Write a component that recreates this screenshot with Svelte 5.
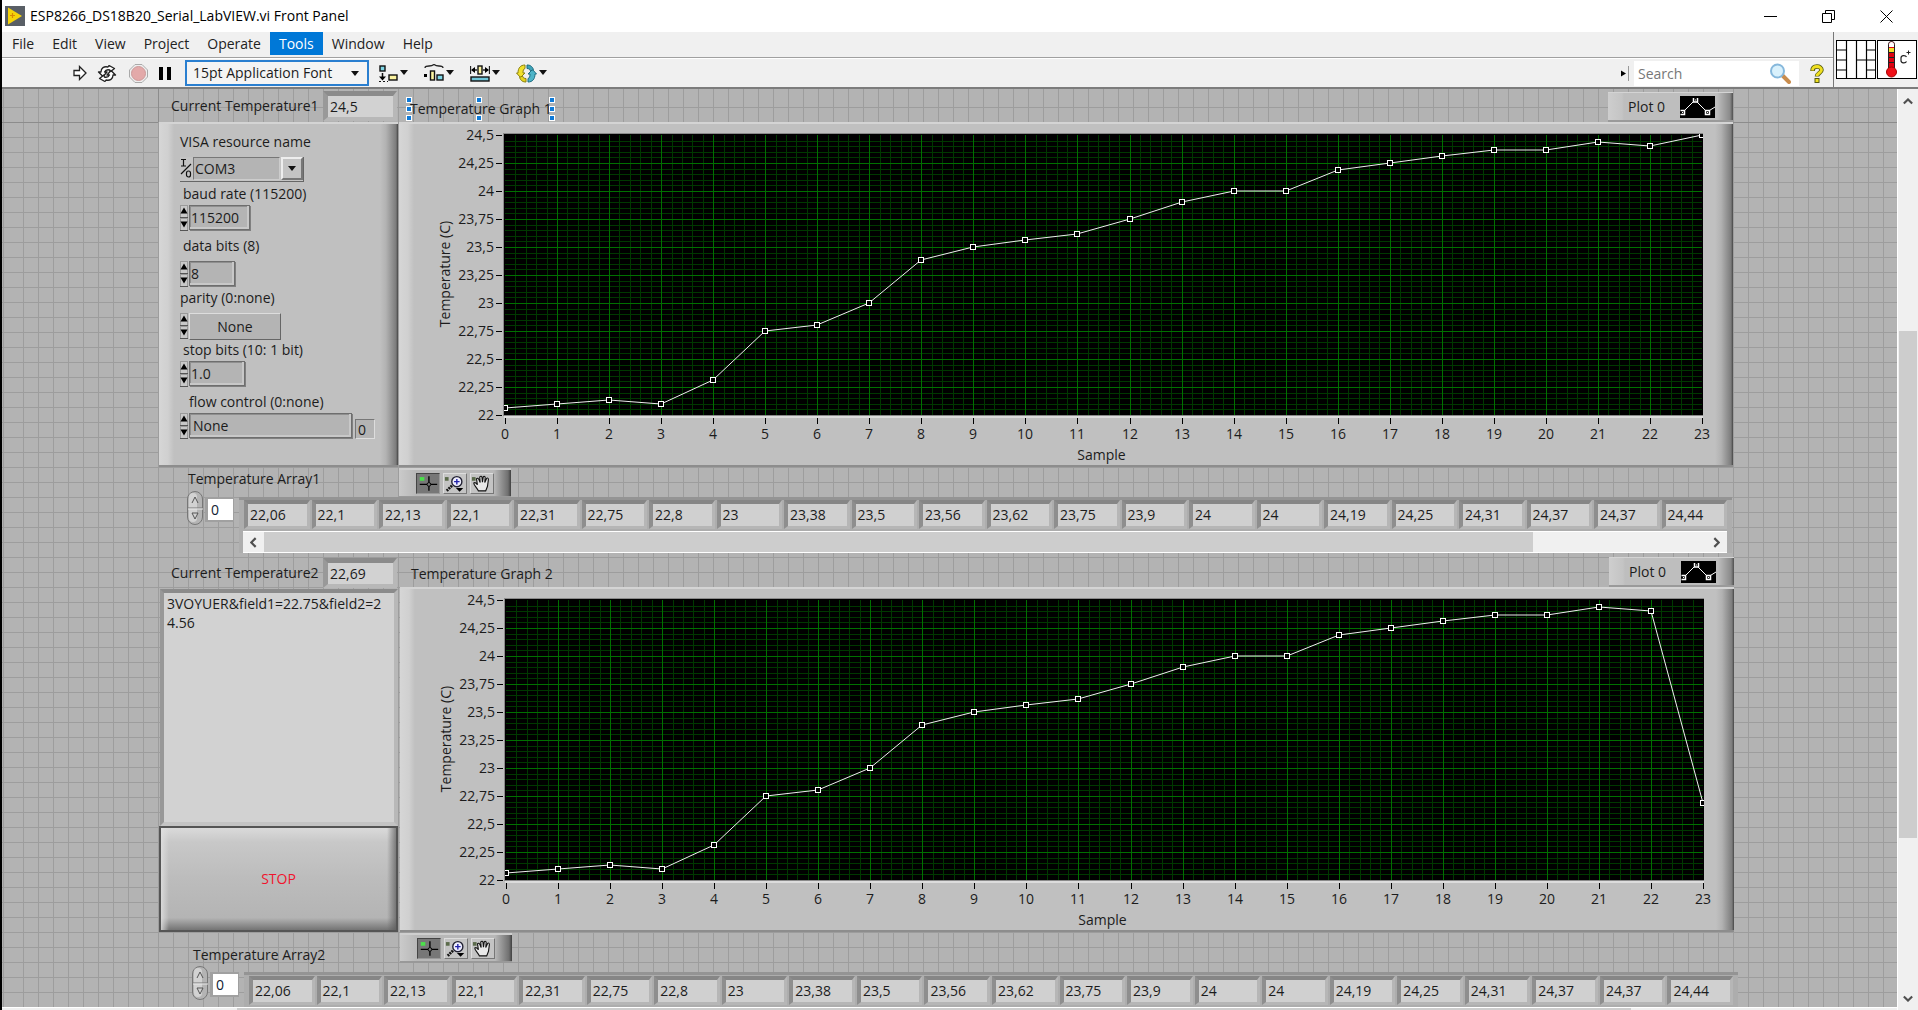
<script>
  const menus = ['File', 'Edit', 'View', 'Project', 'Operate', 'Tools', 'Window', 'Help'];
  const base = [
    22.06, 22.1, 22.13, 22.1, 22.31, 22.75, 22.8, 23, 23.38, 23.5, 23.56, 23.62,
    23.75, 23.9, 24, 24, 24.19, 24.25, 24.31, 24.37, 24.37, 24.44, 24.4
  ];
  const series1 = [...base, 24.5];
  const series2 = [...base, 22.69];
  const cells = base.slice(0, 22).map(comma);

  let serialText = $state('3VOYUER&field1=22.75&field2=24.56');
  let graphWidth = $state(1334);

  const LEFT = 106;
  const TOP = 13;
  const BOTTOM = 293;
  const samples = Array.from({ length: 24 }, (_, i) => i);
  const temps = Array.from({ length: 11 }, (_, i) => 22 + i * 0.25);
  const right = $derived(graphWidth - 31);

  function comma(n) {
    return String(n).replace('.', ',');
  }
  function px(i) {
    return Math.round(LEFT + (i / 23) * (right - LEFT));
  }
  function py(t) {
    return Math.round(BOTTOM - ((t - 22) / 2.5) * (BOTTOM - TOP));
  }
  function minorX() {
    return Array.from({ length: 116 }, (_, i) => i).filter((i) => i % 5).map((i) => px(i / 5));
  }
  function minorY() {
    return Array.from({ length: 51 }, (_, i) => i).filter((i) => i % 5).map((i) => py(22 + i / 20));
  }
  function line(data) {
    return data.map((t, i) => `${px(i)},${py(t)}`).join(' ');
  }
</script>

{#snippet chart(data, id)}
  <svg class="chart" role="img" aria-label="Temperature by sample">
    <clipPath {id}><rect x={LEFT - 1} y={TOP - 1} width={right - LEFT + 2} height={BOTTOM - TOP + 1} /></clipPath>
    <rect x={LEFT - 2} y={TOP - 2} width={right - LEFT + 3} height={BOTTOM - TOP + 3} fill="#8a8a8a" />
    <rect x={LEFT - 1} y={BOTTOM + 1} width={right - LEFT + 2} height="2" fill="#dcdcdc" />
    <rect x={LEFT - 1} y={TOP - 1} width={right - LEFT + 2} height={BOTTOM - TOP + 1} fill="#000" />
    <g clip-path="url(#{id})">
      <g class="minor">
        {#each minorX() as x}<line x1={x + 0.5} x2={x + 0.5} y1={TOP} y2={BOTTOM} />{/each}
        {#each minorY() as y}<line x1={LEFT} x2={right} y1={y + 0.5} y2={y + 0.5} />{/each}
      </g>
      <g class="major">
        {#each samples.slice(1, 23) as i}<line x1={px(i) + 0.5} x2={px(i) + 0.5} y1={TOP} y2={BOTTOM} />{/each}
        {#each temps.slice(1, 10) as t}<line x1={LEFT} x2={right} y1={py(t) + 0.5} y2={py(t) + 0.5} />{/each}
      </g>
      <polyline class="plot" points={line(data)} />
      {#each data as t, i}
        <rect class="mark" x={px(i) - 2.5} y={py(t) - 2.5} width="5" height="5" />
      {/each}
    </g>
    {#each temps as t}
      <line class="tick" x1="97" x2="103" y1={py(t) + 0.5} y2={py(t) + 0.5} />
      <text x="95" y={py(t) + 5} text-anchor="end">{comma(t)}</text>
    {/each}
    {#each samples as i}
      <line class="tick" x1={px(i) + 0.5} x2={px(i) + 0.5} y1="296" y2="302" />
      <text x={px(i)} y="317" text-anchor="middle">{i}</text>
    {/each}
    <text x={(LEFT + right) / 2 - 2} y="338" text-anchor="middle">Sample</text>
    <text transform="translate(51 152) rotate(-90)" text-anchor="middle">Temperature (C)</text>
  </svg>
{/snippet}

{#snippet legend()}
  <div class="legend">
    <span>Plot 0</span>
    <svg width="35" height="22" viewBox="0 0 35 22" aria-hidden="true">
      <rect width="35" height="22" fill="#000" />
      <path d="M3 16 15 4 27 16 35 11" fill="none" stroke="#fff" />
      <path d="M0.500 14.500h4v4h-4M13.500 2v4h4v-4M25.500 14.500h4v4h-4z" fill="#000" stroke="#fff" stroke-width="1.500" />
      <path d="M2 16.500h1M15 4h1M27 16.500h1" stroke="#fff" />
    </svg>
  </div>
{/snippet}

{#snippet palette()}
  <div class="palette">
    <button class="pressed" aria-label="Cursor">
      <svg viewBox="0 0 24 20"><rect x="3" y="3" width="5" height="4" fill="#4be04b" /><path d="M13 2v16M3 11h19" stroke="#000" stroke-width="1.500" /><circle cx="13" cy="11" r="2" fill="#777" stroke="#000" /></svg>
    </button>
    <button aria-label="Zoom">
      <svg viewBox="0 0 24 20"><rect x="1" y="3" width="4" height="4" fill="#5b6b4b" /><path d="M3 18l6-6" stroke="#111" stroke-width="3" stroke-dasharray="2 1" /><circle cx="14" cy="8" r="5.500" fill="#eef" stroke="#223" stroke-width="1.500" /><path d="M14 5v6M11 8h6" stroke="#22a" stroke-width="1.500" /><path d="M13 15h8l-4 4z" fill="#000" /></svg>
    </button>
    <button aria-label="Pan">
      <svg viewBox="0 0 24 20"><rect x="1" y="3" width="4" height="4" fill="#5b6b4b" /><path d="M8 18C6 14 3 12 3 9.500c1.500-1 3 0 4 2L6 5c1-1.500 2-.5 2.500.5L10 9 9.500 3c1-1.500 2.500-1 2.500.5l.5 5 .8-5.500c.8-1.300 2.200-.8 2.200.5L15 9l2-4.500c1-1 2-.3 2 1L18 13l-2 5z" fill="#e8e8e8" stroke="#111" stroke-width="1.200" /></svg>
    </button>
  </div>
{/snippet}

{#snippet arrayIndex(n)}
  <div class="index">
    <svg class="knob" viewBox="0 0 17 34" aria-hidden="true">
      <rect x="0.500" y="0.500" width="15" height="33" rx="7.500" fill="#b4b4b4" stroke="#777" />
      <rect x="2" y="2" width="8" height="29" rx="4" fill="#dadada" opacity=".8" />
      <path d="M1 17h15" stroke="#777" /><path d="M1 18h15" stroke="#e8e8e8" />
      <path d="M5 12l3-6 3 6M5 22h6l-3 6z" fill="none" stroke="#555" />
    </svg>
    <input type="text" value="0" aria-label={`Temperature Array${n} index`} />
  </div>
{/snippet}

{#snippet spin()}
  <svg class="spin" viewBox="0 0 8 26" aria-hidden="true">
    <rect x="0.500" y="0.500" width="7" height="12" fill="#c8c8c8" stroke="#9a9a9a" />
    <rect x="0.500" y="13.500" width="7" height="12" fill="#c8c8c8" stroke="#9a9a9a" />
    <path d="M0 12.500h8M0 25.500h8" stroke="#555" />
    <path d="M0.500 8.500l3.500-6 3.500 6zM0.500 16.500l3.500 6 3.500-6z" fill="#000" />
  </svg>
{/snippet}

{#snippet drop()}
  <svg class="drop" viewBox="0 0 8 6" aria-hidden="true"><path d="M0 0h8L4 5z" fill="#111" /></svg>
{/snippet}

<div class="window">
  <header class="title">
    <svg class="logo" viewBox="0 0 20 20" aria-hidden="true">
      <rect width="20" height="20" fill="#595f66" />
      <path d="M3 1.500 17 10 3 18.500z" fill="#f5d30a" />
      <path d="M5 9.500h5M7.500 7v5" stroke="#d98a00" stroke-width="1.200" />
    </svg>
    <h1>ESP8266_DS18B20_Serial_LabVIEW.vi Front Panel</h1>
    <div class="controls">
      <button aria-label="Minimize"><svg viewBox="0 0 13 13"><path d="M0 6.500h13" /></svg></button>
      <button aria-label="Restore"><svg viewBox="0 0 13 13"><path d="M.5 3.500h9v9h-9zM3.500 3.500v-3h9v9h-3" /></svg></button>
      <button aria-label="Close"><svg viewBox="0 0 13 13"><path d="M.5.5l12 12M12.500.5l-12 12" /></svg></button>
    </div>
  </header>

  <div class="bars">
    <div class="bars-main">
      <nav>
        {#each menus as m}<button class:active={m === 'Tools'}>{m}</button>{/each}
      </nav>
      <div class="toolbar">
        <button class="tool" aria-label="Run">
          <svg width="14" height="16" viewBox="0 0 14 16"><path d="M1 5.500h5.500V1.500L13 8l-6.500 6.500v-4H1z" fill="#fff" stroke="#222" stroke-width="1.300" /></svg>
        </button>
        <button class="tool run2" aria-label="Run Continuously">
          <svg width="20" height="17" viewBox="0 0 20 17"><g fill="#fff" stroke="#222" stroke-width="1.300" stroke-linejoin="round"><path d="M4 7C4 3 7 1 11 2l1-1.500 5.500 3L13 7l-.3-2C10 4.300 8.500 5 7.500 7H10l-4 4.500L1.500 7z" /><path d="M16 10c0 4-3 6-7 5l-1 1.500-5.500-3L7 10l.3 2c2.700.7 4.200 0 5.200-2H10l4-4.500 4.500 4.500z" /></g></svg>
        </button>
        <button class="tool abort" aria-label="Abort Execution">
          <svg width="19" height="19" viewBox="0 0 19 19"><path d="M6 .5h7L18.500 6v7L13 18.500H6L.5 13V6z" fill="#eee" stroke="#aaa" /><circle cx="9.500" cy="9.500" r="7" fill="#e3a9a9" stroke="#c99" /></svg>
        </button>
        <button class="tool pause" aria-label="Pause">
          <svg width="12" height="13" viewBox="0 0 12 13"><path d="M0 0h4v13H0zM8 0h4v13H8z" fill="#000" /></svg>
        </button>
        <div class="font">
          <select aria-label="Text Settings"><option>15pt Application Font</option></select>
          {@render drop()}
        </div>
        <button class="tool menu align" aria-label="Align Objects">
          <svg width="19" height="19" viewBox="0 0 19 19"><rect x="1" y="2" width="5" height="5" fill="#7fd6e6" stroke="#111" stroke-width="1.400" /><rect x="10" y="11" width="8" height="5" fill="#fbf3a0" stroke="#111" stroke-width="1.400" /><path d="M3.500 9v5" stroke="#111" stroke-width="1.500" /><path d="M0 12.500h7l-3.500 4z" /><path d="M0 17.500h9" stroke="#111" stroke-dasharray="2 2" /></svg>
          {@render drop()}
        </button>
        <button class="tool menu" aria-label="Distribute Objects">
          <svg width="20" height="19" viewBox="0 0 20 19"><path d="M1 4c0-2 1.500-2 4-2s3 0 5-1.500C12 2 12.500 2 15 2s4 0 4 2" fill="none" stroke="#222" stroke-width="1.300" /><rect x="6.500" y="7" width="4" height="9" fill="#fbf3a0" stroke="#111" stroke-width="1.400" /><rect x="13" y="11" width="6" height="5" fill="#7fd6e6" stroke="#111" stroke-width="1.400" /><path d="M0 10h3v3H0z" /></svg>
          {@render drop()}
        </button>
        <button class="tool menu" aria-label="Resize Objects">
          <svg width="20" height="19" viewBox="0 0 20 19"><rect x="8" y="2" width="4" height="8" fill="#fbf3a0" stroke="#111" stroke-width="1.400" /><path d="M.5 2v8M19.500 2v8M2 6h5M13 6h5" stroke="#222" stroke-width="1.300" /><path d="M1 6l4-3v6zM19 6l-4-3v6z" /><rect x="1" y="13" width="18" height="4" fill="#6fc6d8" stroke="#111" stroke-width="1.400" /></svg>
          {@render drop()}
        </button>
        <button class="tool menu" aria-label="Reorder">
          <svg width="21" height="19" viewBox="0 0 21 19"><path d="M9 1C4.500 1 2 4 2 9H.5l4 4.500L9 9H7c0-3 .5-4 2-4.500z" fill="#f1e12a" stroke="#8a8010" /><path d="M3.500 13.500C5 17 7 18 10 18v-3.500c-1.500 0-3-.5-3.500-2.500z" fill="#e6d41c" stroke="#8a8010" /><path d="M12 18c4.500 0 7-3 7-8h1.500l-4-4.500L12 10h2c0 3-.5 4-2 4.500z" fill="#4db4c8" stroke="#1c6c80" /><path d="M17.500 5.500C16 2 14 1 11 1v3.500c1.500 0 3 .5 3.500 2.500z" fill="#3fa3b8" stroke="#1c6c80" /></svg>
          {@render drop()}
        </button>
        <div class="search">
          <svg width="9" height="15" viewBox="0 0 9 15" aria-hidden="true"><path d="M1 4.500l5 3-5 3z" fill="#000" /><path d="M8.500 0v15" stroke="#999" /></svg>
          <div class="search-box">
            <input type="search" placeholder="Search" aria-label="Search" />
            <svg width="22" height="21" viewBox="0 0 22 21" aria-hidden="true"><path d="M13 12l7 7" stroke="#c98d4e" stroke-width="4" stroke-linecap="round" /><circle cx="8.500" cy="8" r="6.500" fill="#d9f1fc" stroke="#86b8dc" stroke-width="2" /></svg>
          </div>
        </div>
        <button class="tool help" aria-label="Context Help">
          <svg width="14" height="19" viewBox="0 0 14 19"><path d="M2.500 7C2.500 3.500 4.500 2.500 7 2.500S11.500 4 11.500 6c0 3-4.500 3-4.500 6.500" fill="none" stroke="#555a10" stroke-width="4.500" /><path d="M2.500 6.500C2.500 3.500 4.500 2.500 7 2.500S11.500 4 11.500 6c0 3-4.500 3-4.500 6" fill="none" stroke="#f0e020" stroke-width="2.800" /><rect x="5" y="14.500" width="4" height="4" fill="#f0e020" stroke="#555a10" /></svg>
        </button>
      </div>
    </div>
    <div class="panes">
      <svg width="40" height="39" viewBox="0 0 40 39" role="img" aria-label="Connector pane">
        <rect x=".5" y=".5" width="39" height="38" fill="#fff" stroke="#000" />
        <path d="M10.500 0v39M20.500 0v39M30.500 0v39M0 10h10.500M0 20h10.500M0 30h10.500M20.500 20h19.500M30.500 10H40M30.500 30H40" stroke="#000" stroke-width="1.200" />
      </svg>
      <svg width="40" height="39" viewBox="0 0 40 39" role="img" aria-label="VI icon">
        <rect x=".5" y=".5" width="39" height="38" fill="#fff" stroke="#000" />
        <path d="M11.500 4.500a3 3 0 0 1 6 0V28h-6z" fill="#e00010" stroke="#222" />
        <path d="M12 4.500a2.500 2.500 0 0 1 5 0V7h-5z" fill="#fff" /><path d="M12 8h5v4h-5z" fill="#f3e02a" />
        <path d="M12 12.500h5M12 17.500h5M12 22.500h5" stroke="#222" />
        <circle cx="14.500" cy="32" r="5" fill="#f01018" stroke="#a00" />
        <path d="M29.500 17c-1-2-5.500-2-5.500 1v2.500c0 3 4.500 3 5.500 1" fill="none" stroke="#222" stroke-width="1.200" />
        <path d="M29.500 12.500h4M31.500 10.500v4" stroke="#222" />
      </svg>
    </div>
  </div>

  <div class="work">
    <div class="canvas">
      <main>
        <section class="station">
          <div class="side">
            <div class="reading">
              <label for="cur1">Current Temperature1</label>
              <output id="cur1" class="sunk">24,5</output>
            </div>
            <form class="cluster raised">
              <div class="field roomy">
                <label for="visa">VISA resource name</label>
                <div class="row visa">
                  <svg width="12" height="24" viewBox="0 0 12 24" aria-hidden="true"><path d="M1 2.500h5M3.500 2v7M1 9h5M1 17L11 7" fill="none" stroke="#111" stroke-width="1.200" /><rect x="6.500" y="14" width="4" height="6" rx="2" fill="none" stroke="#111" stroke-width="1.200" /></svg>
                  <select id="visa"><option>COM3</option></select>
                  <span class="arrow">{@render drop()}</span>
                </div>
              </div>
              <div class="field in1">
                <label for="baud">baud rate (115200)</label>
                <div class="row">{@render spin()}<input id="baud" class="w62" value="115200" /></div>
              </div>
              <div class="field roomy in1">
                <label for="bits">data bits (8)</label>
                <div class="row">{@render spin()}<input id="bits" class="w46" value="8" /></div>
              </div>
              <div class="field roomy">
                <label for="parity">parity (0:none)</label>
                <div class="row">{@render spin()}<select id="parity" class="ring"><option>None</option></select></div>
              </div>
              <div class="field in1">
                <label for="stop">stop bits (10: 1 bit)</label>
                <div class="row">{@render spin()}<input id="stop" class="w57" value="1.0" /></div>
              </div>
              <div class="field in2">
                <label for="flow">flow control (0:none)</label>
                <div class="row">{@render spin()}<select id="flow"><option>None</option></select><output class="code">0</output></div>
              </div>
            </form>
            <h2 class="array-label">Temperature Array1</h2>
          </div>
          <div class="graph">
            <div class="graph-head">
              <h2 class="selected">Temperature Graph 1
                <i class="nw"></i><i class="n"></i><i class="ne"></i><i class="w"></i><i class="e"></i><i class="sw"></i><i class="s"></i><i class="se"></i>
              </h2>
              {@render legend()}
            </div>
            <div class="graph-body raised" bind:clientWidth={graphWidth}>{@render chart(series1, 'clip-a')}</div>
            {@render palette()}
          </div>
        </section>

        <section class="array">
          {@render arrayIndex(1)}
          <div class="bezel">
            <div class="cells">{#each cells as c}<output class="cell">{c}</output>{/each}</div>
            <div class="hscroll">
              <button aria-label="Scroll left"><svg viewBox="0 0 8 12"><path d="M6.500 1l-5 5 5 5" /></svg></button>
              <div class="rail"><div class="thumb"></div></div>
              <button aria-label="Scroll right"><svg viewBox="0 0 8 12"><path d="M1.500 1l5 5-5 5" /></svg></button>
            </div>
          </div>
        </section>

        <section class="station second">
          <div class="side">
            <div class="reading">
              <label for="cur2">Current Temperature2</label>
              <output id="cur2" class="sunk">22,69</output>
            </div>
            <textarea aria-label="Serial output" readonly bind:value={serialText}></textarea>
            <button class="stop">STOP</button>
            <h2 class="array-label">Temperature Array2</h2>
          </div>
          <div class="graph">
            <div class="graph-head">
              <h2>Temperature Graph 2</h2>
              {@render legend()}
            </div>
            <div class="graph-body raised">{@render chart(series2, 'clip-b')}</div>
            {@render palette()}
          </div>
        </section>

        <section class="array second">
          {@render arrayIndex(2)}
          <div class="bezel">
            <div class="cells">{#each cells as c}<output class="cell">{c}</output>{/each}</div>
          </div>
        </section>
      </main>
      <div class="bottom-scroll"><span></span></div>
    </div>
    <div class="vscroll">
      <button aria-label="Scroll up"><svg viewBox="0 0 12 8"><path d="M1 6.500l5-5 5 5" /></svg></button>
      <div class="rail"><div class="thumb"></div></div>
      <button aria-label="Scroll down"><svg viewBox="0 0 12 8"><path d="M1 1.500l5 5 5-5" /></svg></button>
    </div>
  </div>
</div>

<style>
  :global(body) {
    margin: 0;
    font-family: 'Open Sans', 'Noto Sans', sans-serif;
    font-size: 14px;
    line-height: 16px;
    color: #1c1c1c;
  }
  * { box-sizing: border-box; }
  button, input, select, textarea {
    font: inherit;
    color: inherit;
    margin: 0;
    padding: 0;
    border: 0;
    border-radius: 0;
    background: none;
    appearance: none;
    outline: 0;
  }
  h1, h2 { margin: 0; font-size: 14px; font-weight: 400; }
  svg { display: block; flex: none; }

  .window {
    display: flex;
    flex-direction: column;
    height: 100vh;
    border-left: 2px solid #000;
    background: #f0f0f0;
    overflow: hidden;
  }
  .title {
    display: flex;
    align-items: center;
    height: 32px;
    flex: none;
    padding-left: 3px;
    background: #fff;
    color: #000;
  }
  .logo { width: 20px; height: 20px; }
  h1 { padding-left: 5px; line-height: 20px; }
  .controls { display: flex; margin-left: auto; padding-right: 3px; }
  .controls button { display: grid; place-items: center; width: 58px; height: 30px; }
  .controls svg { width: 13px; height: 13px; fill: none; stroke: #000; }

  .bars { display: flex; flex: none; height: 57px; border-bottom: 2px solid #7c7c7c; }
  .bars-main { flex: 1; min-width: 0; }
  nav { display: flex; height: 26px; padding-left: 1px; border-bottom: 1px solid #a0a0a0; }
  nav button { height: 23px; padding: 0 9px; white-space: nowrap; color: #222; }
  nav button.active { background: #0078d7; color: #fff; }
  .toolbar { display: flex; align-items: center; height: 29px; padding-left: 71px; border-top: 1px solid #fff; }
  .tool { display: flex; align-items: center; flex: none; }
  .run2 { margin-left: 10px; }
  .abort { margin-left: 12px; }
  .pause { margin-left: 11px; }
  .menu { margin-left: 16px; gap: 2px; }
  .align { margin-left: 10px; }
  .drop { width: 8px; height: 6px; }
  .font { position: relative; flex: none; width: 184px; height: 26px; margin-left: 14px; border: 2px solid #2a7fd0; background: #f4f4f4; }
  .font select { width: 100%; height: 22px; padding-left: 6px; }
  .font .drop { position: absolute; right: 8px; top: 9px; pointer-events: none; }
  .search { display: flex; align-items: center; gap: 5px; margin-left: auto; }
  .search-box { display: flex; align-items: center; width: 165px; height: 25px; padding: 0 8px 0 4px; background: #fff; }
  .search input { flex: 1; min-width: 0; height: 24px; }
  .search input::placeholder { color: #777; opacity: 1; }
  .help { margin: 0 9px 0 11px; }
  .panes { display: flex; flex: none; gap: 1px; width: 85px; padding: 8px 1px 0 2px; border-left: 1px solid #777; }

  .work { display: flex; flex: 1; min-height: 0; }
  .canvas {
    display: flex;
    flex-direction: column;
    flex: 1;
    min-width: 0;
    background:
      linear-gradient(#8c8c8c, #8c8c8c) 0 33px / 156px 1px no-repeat,
      linear-gradient(#8c8c8c, #8c8c8c) 156px 0 / 1px 33px no-repeat,
      linear-gradient(#8c8c8c, #8c8c8c) 1731px 33px / 100% 1px no-repeat,
      repeating-linear-gradient(90deg, transparent 0 14px, #9d9d9d 14px 15px) 7px 0,
      repeating-linear-gradient(transparent 0 14px, #9d9d9d 14px 15px) 0 4px,
      #b3b3b3;
  }
  main { flex: 1; min-height: 0; padding: 0 164px 0 157px; overflow: hidden; }
  .bottom-scroll { display: flex; flex: none; height: 3px; border-top: 1px solid #fff; background: #f0f0f0; padding-left: 235px; }
  .bottom-scroll span { width: 84%; background: #cdcdcd; }

  .vscroll { display: flex; flex-direction: column; flex: none; width: 21px; border-left: 1px solid #fff; background: #f0f0f0; }
  .vscroll button, .hscroll button { display: grid; place-items: center; flex: none; }
  .vscroll button { height: 24px; }
  .vscroll .rail { flex: 1; padding: 0 1px; }
  .vscroll .thumb { position: relative; top: 25%; height: 58%; background: #cdcdcd; }
  .vscroll svg { width: 10px; height: 7px; fill: none; stroke: #505050; stroke-width: 2.500; }
  .hscroll svg { width: 7px; height: 11px; fill: none; stroke: #505050; stroke-width: 2.500; }

  .station { display: flex; gap: 1px; height: 408px; }
  .station.second { gap: 2px; margin: 1px -1px 0 0; }
  .side { display: flex; flex-direction: column; flex: none; width: 239px; }
  .graph { display: flex; flex-direction: column; flex: 1; min-width: 0; }

  .reading { display: flex; align-items: center; gap: 3px; height: 33px; padding-left: 12px; flex: none; white-space: nowrap; }
  .second .reading { height: 35px; padding-top: 3px; }
  .sunk {
    width: 74px;
    height: 30px;
    margin-left: auto;
    margin-right: 1px;
    padding-left: 2px;
    line-height: 21px;
    background: #d2d2d2;
    border: solid;
    border-width: 5px 4px 4px 5px;
    border-color: #8b8b8b #b8b8b8 #b8b8b8 #999;
  }

  .raised {
    background: linear-gradient(90deg, #d6d6d6 0, #d0d0d0 9px, #c0c0c0 15px, #c0c0c0 calc(100% - 18px), #b2b2b2 calc(100% - 12px), #7c7c7c calc(100% - 2px), #454545 100%);
    box-shadow: inset 0 2px #d4d4d4, inset 0 -2px #8d8d8d;
  }
  .cluster { display: grid; grid-auto-rows: 52px; height: 345px; flex: none; padding: 12px 0 0 21px; }
  .field { display: flex; flex-direction: column; gap: 3px; }
  .field.roomy { gap: 7px; }
  .in1 label { padding-left: 3px; }
  .in2 label { padding-left: 9px; }
  .row { display: flex; align-items: flex-start; gap: 1px; height: 26px; }
  .spin { width: 8px; height: 26px; }
  .row input, .row select {
    height: 25px;
    padding-left: 1px;
    background: #b4b4b4;
    border: 1px solid #6e6e6e;
    box-shadow: inset -2px -2px #c8c8c8, inset 1px 1px #8f8f8f, 1px 1px #808080;
  }
  .w62 { width: 61px; }
  .w46 { width: 46px; }
  .w57 { width: 56px; }
  .row .ring {
    width: 92px;
    height: 27px;
    padding: 0;
    text-align: center;
    text-align-last: center;
    border-color: #ddd #666 #666 #ddd;
    box-shadow: none;
  }
  #flow { width: 163px; padding-left: 3px; }
  .visa { width: 124px; height: 25px; background: #c4c4c4; border-right: 1px solid #666; border-bottom: 1px solid #666; }
  .visa select { flex: 1; min-width: 0; height: 23px; box-shadow: none; border-color: #777 #ccc #ccc #777; }
  .arrow { display: grid; place-items: center; width: 22px; height: 23px; border: 2px solid; border-color: #eee #777 #777 #eee; pointer-events: none; }
  .code { width: 20px; height: 20px; margin: 6px 0 0 2px; padding-left: 2px; line-height: 19px; background: #b4b4b4; border: 1px solid; border-color: #777 #ddd #ddd #777; }

  .array-label { padding: 4px 0 0 29px; white-space: nowrap; }
  .second .array-label { padding: 15px 0 0 34px; }

  .graph-head { display: flex; align-items: flex-end; justify-content: space-between; height: 33px; padding-left: 11px; flex: none; }
  .graph-head h2 { position: relative; padding-bottom: 5px; white-space: nowrap; }
  .selected i { position: absolute; width: 6px; height: 6px; background: #0f7ad8; border: 1px solid #fff; }
  .selected .nw, .selected .n, .selected .ne { top: -4px; }
  .selected .w, .selected .e { top: 5px; }
  .selected .sw, .selected .s, .selected .se { top: 14px; }
  .selected .nw, .selected .w, .selected .sw { left: -4px; }
  .selected .n, .selected .s { left: 66px; }
  .selected .ne, .selected .e, .selected .se { right: -3px; }
  .legend {
    display: flex;
    align-items: center;
    gap: 15px;
    width: 125px;
    height: 30px;
    padding-left: 20px;
    background: linear-gradient(90deg, #cecece 0, #c4c4c4 14px, #bebebe 16px, #bebebe calc(100% - 16px), #8a8a8a calc(100% - 3px), #505050 100%);
    box-shadow: inset 0 1px #d4d4d4, inset 0 -2px #9a9a9a;
  }
  .graph-body { height: 345px; flex: none; }
  .chart { width: 100%; height: 345px; }
  .chart text { fill: #1c1c1c; }
  .minor line { stroke: #003800; shape-rendering: crispEdges; }
  .major line { stroke: #007000; shape-rendering: crispEdges; }
  .tick { stroke: #000; shape-rendering: crispEdges; }
  .plot { fill: none; stroke: #eee; }
  .mark { fill: #000; stroke: #fff; shape-rendering: crispEdges; }

  .palette {
    display: flex;
    align-items: center;
    gap: 3px;
    flex: none;
    width: 112px;
    height: 30px;
    margin-top: 1px;
    padding-left: 17px;
    background: linear-gradient(90deg, #cacaca 0, #b8b8b8 17px, #b8b8b8 95px, #707070 109px, #404040 100%);
    box-shadow: inset 0 2px #cfcfcf, inset 0 -2px #999;
  }
  .palette button { width: 24px; height: 21px; background: #c4c4c4; border: 1px solid; border-color: #ddd #777 #777 #ddd; }
  .palette .pressed { background: #777; border-color: #444 #999 #999 #444; }
  .palette svg { width: 100%; height: 100%; }

  .array { display: flex; align-items: flex-start; margin-right: 1px; }
  .array.second { margin: 10px -5px 0 5px; }
  .index { display: flex; flex: none; width: 80px; padding-left: 28px; gap: 1px; }
  .knob { width: 17px; height: 34px; margin-top: -6px; }
  .index input { width: 29px; height: 25px; padding-left: 3px; background: #fff; border: solid #a0a0a0; border-width: 2px 1px 2px 3px; color: #123; }
  .bezel { flex: 1; min-width: 0; padding: 3px 5px 0; background: #adadad; box-shadow: inset 0 3px #949494; }
  .cells { display: grid; grid-template-columns: repeat(22, 1fr); gap: 2px; padding-bottom: 4px; }
  .cell {
    height: 29px;
    padding-left: 2px;
    line-height: 22px;
    background: #d0d0d0;
    border: solid;
    border-width: 4px 3px 3px 4px;
    border-color: #868686 #b6b6b6 #b6b6b6 #8e8e8e;
  }
  .hscroll { display: flex; height: 22px; margin: -2px 0 0 -1px; background: #f0f0f0; border: solid #fff; border-width: 1px 0; }
  .hscroll button { width: 21px; }
  .hscroll .rail { flex: 1; }
  .hscroll .thumb { width: 88%; height: 100%; background: #cdcdcd; }
  .second .bezel { padding-top: 4px; }

  textarea {
    height: 237px;
    flex: none;
    margin-left: 1px;
    padding: 1px 8px 0 3px;
    line-height: 19px;
    resize: none;
    overflow: hidden;
    word-break: break-all;
    background: #d2d2d2;
    border: solid;
    border-width: 4px;
    border-color: #8b8b8b #b8b8b8 #c4c4c4 #989898;
  }
  .stop {
    height: 106px;
    flex: none;
    color: #f0142d;
    background:
      linear-gradient(90deg, rgba(225, 225, 225, 0.8), transparent 8px, transparent calc(100% - 9px), rgba(90, 90, 90, 0.7)),
      linear-gradient(#dadada, #c8c8c8 14px, #bcbcbc 50%, #b4b4b4 88%, #747474);
    border: 2px solid #555;
  }
</style>
